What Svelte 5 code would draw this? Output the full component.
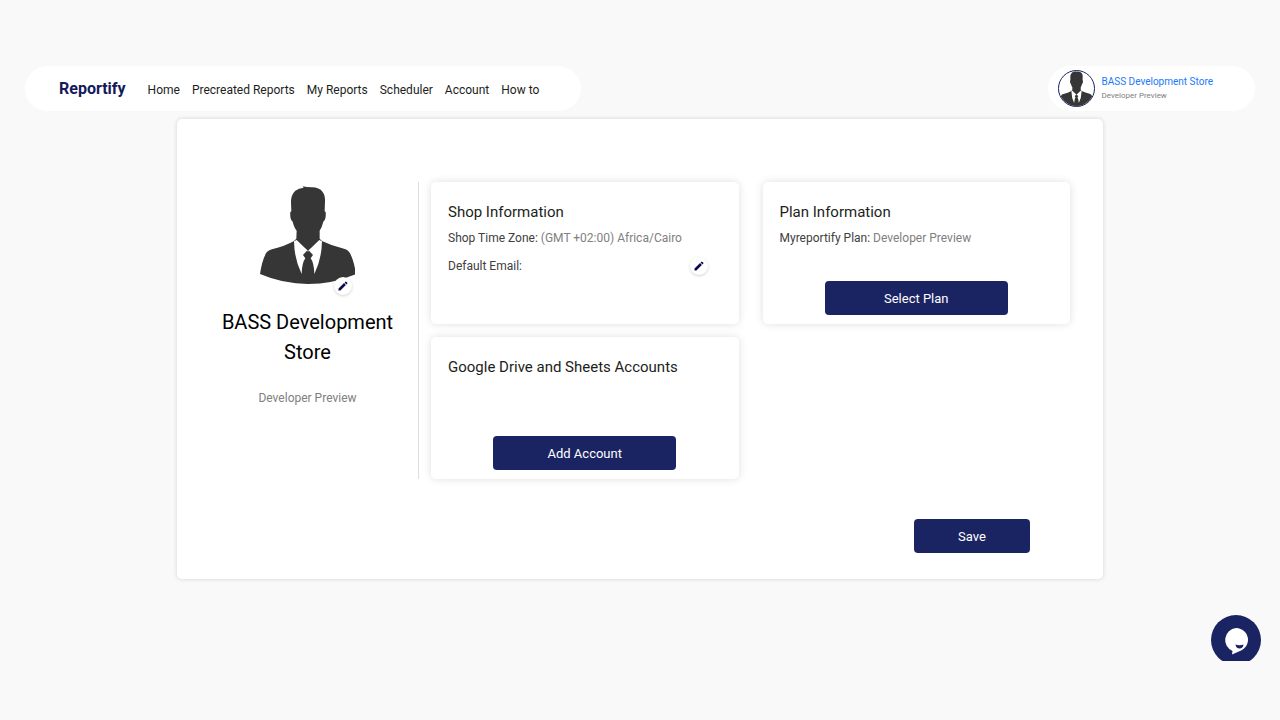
<script>
  const links = ['Home', 'Precreated Reports', 'My Reports', 'Scheduler', 'Account', 'How to'];
  const store = 'BASS Development Store';
  const plan = 'Developer Preview';
</script>

{#snippet person()}
  <svg viewBox="0 0 288 296" aria-hidden="true">
    <path fill="#363636" d="M0 264Q6 224 18 202Q22 194 36 190Q76 180 102 165L109 158L110 134Q103 126 98 107Q89 100 91 78L94 76L93 48Q93 26 106 14Q116 6 131 5L128 1Q138 4 156 4Q178 4 188 18Q196 28 195 48L194 76L197 78Q199 100 190 107Q186 124 179 134L179 158L186 165Q216 180 252 188Q266 192 270 202Q282 224 288 264Q218 294 144 294Q70 294 0 264Z" />
    <path fill="#fff" d="M102 166L110 162L142 193L129 207L136 217Q126 230 125 264Q103 220 102 166Z" />
    <path fill="#fff" d="M186 166L178 162L146 193L159 207L152 217Q162 230 163 264Q185 220 186 166Z" />
    <path fill="none" stroke="#fff" stroke-width="2" d="M137 190L144 196L151 190" />
  </svg>
{/snippet}

{#snippet pencil()}
  <svg viewBox="0 0 24 24" aria-hidden="true">
    <path fill="#0b0b55" d="M3 17.2V21h3.8L17.8 9.9l-3.7-3.7L3 17.2zM20.7 7a1 1 0 0 0 0-1.4l-2.3-2.3a1 1 0 0 0-1.4 0l-1.8 1.8 3.7 3.7L20.7 7z" />
  </svg>
{/snippet}

<div class="page">
  <header>
    <nav aria-label="Main">
      <a class="brand" href="#home">Reportify</a>
      {#each links as link}
        <a href="#{link.toLowerCase().replaceAll(' ', '-')}">{link}</a>
      {/each}
    </nav>
    <div class="user">
      <span class="avatar">{@render person()}</span>
      <div>
        <a href="#account">{store}</a>
        <small>{plan}</small>
      </div>
    </div>
  </header>

  <main>
    <div class="content">
      <aside>
        <div class="portrait">
          {@render person()}
          <button class="edit" aria-label="Change picture">{@render pencil()}</button>
        </div>
        <h1>{store}</h1>
        <p>{plan}</p>
      </aside>
      <div class="cards">
        <section>
          <h2>Shop Information</h2>
          <p>Shop Time Zone: <span>(GMT +02:00) Africa/Cairo</span></p>
          <div class="email">
            <p>Default Email:</p>
            <button class="edit" aria-label="Edit default email">{@render pencil()}</button>
          </div>
        </section>
        <section>
          <h2>Plan Information</h2>
          <p>Myreportify Plan: <span>{plan}</span></p>
          <button class="primary">Select Plan</button>
        </section>
        <section>
          <h2>Google Drive and Sheets Accounts</h2>
          <button class="primary">Add Account</button>
        </section>
      </div>
    </div>
    <button class="primary save">Save</button>
  </main>

  <button class="chat" aria-label="Open chat">
    <svg viewBox="0 0 50 46" aria-hidden="true">
      <circle cx="25" cy="25" r="25" fill="#1b2463" />
      <path fill="#fff" d="M25 13a12 12 0 0 1 12 12c0 5-3.500 9-8 11L21 39.500l.5-3.500A12 12 0 0 1 25 13z" />
      <path fill="#1b2463" d="M24.500 29.500q4 1.500 8 0q-.5 4-4 4t-4-4z" />
    </svg>
  </button>
</div>

<style>
  :global(body) {
    margin: 0;
    background: #f9f9f9;
  }
  .page {
    box-sizing: border-box;
    min-height: 100vh;
    padding: 66px 0 48px;
    font-family: Roboto, "Liberation Sans", sans-serif;
    color: #1c1e21;
  }
  h1, h2, p {
    margin: 0;
    font-weight: 400;
  }
  a {
    color: inherit;
    text-decoration: none;
  }
  button {
    font: inherit;
    border: 0;
    padding: 0;
    cursor: pointer;
  }
  svg {
    display: block;
  }
  header {
    display: flex;
    justify-content: space-between;
    padding: 0 25px;
  }
  nav, .user {
    box-sizing: border-box;
    display: flex;
    align-items: center;
    height: 45px;
    border-radius: 23px;
    background: #fff;
  }
  nav {
    gap: 12px;
    padding: 2px 42px 0 34px;
    font-size: 12px;
    line-height: 20px;
    white-space: nowrap;
  }
  .brand {
    margin-right: 10px;
    padding-bottom: 2px;
    font-size: 16px;
    font-weight: 700;
    color: #14195a;
  }
  .user {
    gap: 6px;
    padding: 0 42px 0 10px;
    font-size: 10px;
    line-height: 14px;
  }
  .user a {
    display: block;
    color: #1a7af8;
  }
  .user small {
    display: block;
    font-size: 8px;
    color: #808080;
  }
  .avatar {
    box-sizing: border-box;
    width: 37px;
    height: 37px;
    overflow: hidden;
    border: 1px solid #1b2463;
    border-radius: 50%;
  }
  main {
    display: flex;
    flex-direction: column;
    box-sizing: border-box;
    margin: 8px 177px 0;
    padding: 63px 33px 26px 20px;
    border-radius: 5px;
    background: #fff;
    box-shadow: 0 0 4px rgba(0, 0, 0, 0.16);
  }
  .content {
    display: flex;
    gap: 12px;
  }
  aside {
    box-sizing: border-box;
    flex: 0 0 222px;
    padding: 4px 20px 0;
    border-right: 1px solid #dedede;
    text-align: center;
  }
  .portrait {
    position: relative;
    width: 96px;
    margin: 0 auto;
  }
  .portrait .edit {
    position: absolute;
    right: 4px;
    bottom: -10px;
  }
  h1 {
    margin-top: 22px;
    font-size: 20px;
    line-height: 30px;
    color: #000;
  }
  aside p {
    margin-top: 21px;
    font-size: 12px;
    line-height: 20px;
    color: #808080;
  }
  .cards {
    flex: 1;
    display: grid;
    grid-template-columns: 1fr 1fr;
    gap: 13px 24px;
  }
  section {
    box-sizing: border-box;
    display: flex;
    flex-direction: column;
    min-height: 142px;
    padding: 20px 17px 9px;
    border-radius: 5px;
    background: #fff;
    box-shadow: 0 0 8px rgba(0, 0, 0, 0.13);
  }
  h2 {
    margin-bottom: 6px;
    font-size: 15px;
    line-height: 20px;
  }
  section p {
    font-size: 12px;
    line-height: 20px;
    color: #404040;
  }
  section p span {
    color: #808080;
  }
  .email {
    display: flex;
    justify-content: space-between;
    align-items: center;
    margin-top: 8px;
    padding-right: 14px;
  }
  .edit {
    display: grid;
    place-items: center;
    width: 18px;
    height: 18px;
    border-radius: 50%;
    background: #fff;
    box-shadow: 0 1px 3px rgba(0, 0, 0, 0.18);
  }
  .edit svg {
    width: 12px;
    height: 12px;
  }
  .primary {
    align-self: center;
    width: 183px;
    height: 34px;
    margin-top: auto;
    border-radius: 4px;
    background: #1b2463;
    color: #fff;
    font-size: 13px;
    font-weight: 400;
  }
  .save {
    align-self: flex-end;
    width: 116px;
    margin: 40px 40px 0 0;
  }
  .chat {
    position: fixed;
    right: 19px;
    bottom: 59px;
    width: 50px;
    background: none;
  }
</style>
